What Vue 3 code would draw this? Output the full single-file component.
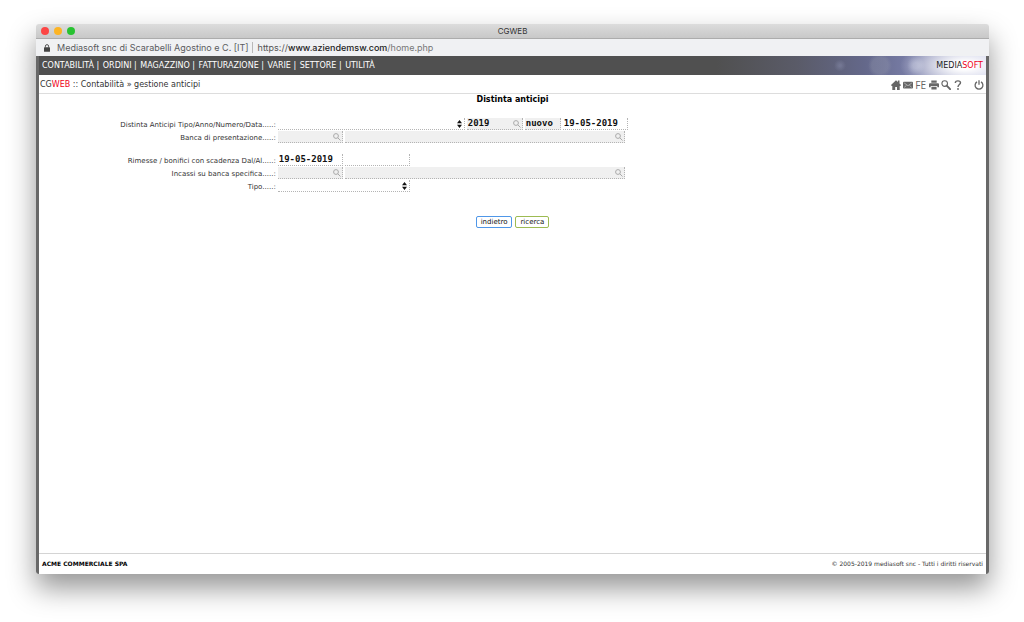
<script setup>
import { ref } from 'vue'

const menu = ['CONTABILITÀ', 'ORDINI', 'MAGAZZINO', 'FATTURAZIONE', 'VARIE', 'SETTORE', 'UTILITÀ']
const form = ref({
  tipo: '', anno: '2019', numero: 'nuovo', data: '19-05-2019',
  banca: '', bancaNome: '', dal: '19-05-2019', al: '',
  incassi: '', incassiNome: '', tipoIncasso: ''
})
</script>

<template>
  <div class="desktop">
    <div class="window">
      <div class="titlebar">
        <div class="lights">
          <button class="light red" aria-label="Chiudi"></button>
          <button class="light amber" aria-label="Riduci"></button>
          <button class="light green" aria-label="Ingrandisci"></button>
        </div>
        <span class="window-title">CGWEB</span>
      </div>
      <div class="address">
        <svg class="lock" viewBox="0 0 6 8"><path d="M1.4 3.5V2.2a1.6 1.6 0 0 1 3.2 0v1.3" fill="none" stroke="#444" stroke-width=".9" /><rect y="3.2" width="6" height="4.5" rx=".5" fill="#444" /></svg>
        <span class="owner">Mediasoft snc di Scarabelli Agostino e C. [IT]</span>
        <span class="url">https://<b>www.aziendemsw.com</b><i>/home.php</i></span>
      </div>

      <div class="page">
        <header class="menubar">
          <nav class="menu">
            <template v-for="(item, i) in menu" :key="item"><span v-if="i" class="sep"> | </span><a href="#">{{ item }}</a></template>
          </nav>
          <div class="brand">MEDIA<span>SOFT</span></div>
        </header>

        <div class="crumbs">
          <div class="path">CG<span class="web">WEB</span> :: Contabilità » gestione anticipi</div>
          <div class="tools">
            <a href="#" aria-label="Home"><svg width="10" height="10" viewBox="0 0 10 10"><path d="M5 .3 6.9 2V.5h1.600v3L10 5l-.7.900H8.700V10H6V7H4.200v3H1.300V5.900H.7L0 5z" /></svg></a>
            <a href="#" aria-label="Posta"><svg width="10" height="10" viewBox="0 0 10 10"><rect y="1.700" width="10" height="6.800" rx=".9" /><path d="m1.200 3 3.800 2.700L8.800 3M1.200 7.400l2.300-2M8.800 7.400l-2.300-2" fill="none" stroke="#ccc" stroke-width=".7" /></svg></a>
            <a href="#" class="fe">FE</a>
            <a href="#" aria-label="Stampa"><svg width="10" height="10" viewBox="0 0 10 10"><path d="M2.300.6h5.400v2.200H2.300zM1 3.300h8q1 0 1 1v3H8.300V6H1.700v1.300H0v-3q0-1 1-1zM2.400 6.700h5.200v2.700H2.400z" /></svg></a>
            <a href="#" aria-label="Cerca"><svg width="10" height="10" viewBox="0 0 10 10"><circle cx="3.700" cy="3.600" r="2.800" fill="none" stroke="#666" stroke-width="1.100" /><path d="m5.700 5.700 3.400 3.500" stroke="#666" stroke-width="1.900" stroke-linecap="round" /></svg></a>
            <a href="#" aria-label="Aiuto"><svg width="10" height="10" viewBox="0 0 10 10"><path d="M2.300 2.900C2.300.1 7.500.2 7.500 2.800 7.500 4.600 5 4.600 5 6.900" fill="none" stroke="#666" stroke-width="1.400" /><circle cx="5" cy="9" r=".9" /></svg></a>
            <a href="#" class="power" aria-label="Esci"><svg width="10" height="10" viewBox="0 0 10 10"><path d="M3 1.900a3.900 3.900 0 1 0 4 0M5 .3v4.500" fill="none" stroke="#666" stroke-width="1.300" /></svg></a>
          </div>
        </div>

        <main>
          <h1>Distinta anticipi</h1>
          <form @submit.prevent>
            <div class="row">
              <label for="tipo">Distinta Anticipi Tipo/Anno/Numero/Data.....:</label>
              <div class="field w-type">
                <select id="tipo" v-model="form.tipo"><option value=""></option></select>
                <svg class="arrows" viewBox="0 0 5 8"><path d="M0 3.300 2.500 0 5 3.300zM0 4.700h5L2.500 8z" /></svg>
              </div>
              <div class="field grey w-year">
                <input v-model="form.anno" aria-label="Anno">
                <button class="lens" type="button" aria-label="Cerca anno"><svg viewBox="0 0 8 8"><circle cx="3" cy="3" r="2.400" /><path d="m4.800 4.800 2.700 2.700" /></svg></button>
              </div>
              <div class="field grey w-number"><input v-model="form.numero" aria-label="Numero"></div>
              <div class="field w-code"><input v-model="form.data" aria-label="Data"></div>
            </div>
            <div class="row">
              <label for="banca">Banca di presentazione.....:</label>
              <div class="field grey w-code">
                <input id="banca" v-model="form.banca">
                <button class="lens" type="button" aria-label="Cerca codice banca"><svg viewBox="0 0 8 8"><circle cx="3" cy="3" r="2.400" /><path d="m4.800 4.800 2.700 2.700" /></svg></button>
              </div>
              <div class="field grey w-name">
                <input v-model="form.bancaNome" aria-label="Nome banca">
                <button class="lens" type="button" aria-label="Cerca nome banca"><svg viewBox="0 0 8 8"><circle cx="3" cy="3" r="2.400" /><path d="m4.800 4.800 2.700 2.700" /></svg></button>
              </div>
            </div>
            <div class="row group">
              <label for="dal">Rimesse / bonifici con scadenza Dal/Al.....:</label>
              <div class="field w-code"><input id="dal" v-model="form.dal"></div>
              <div class="field w-code"><input v-model="form.al" aria-label="Al"></div>
            </div>
            <div class="row">
              <label for="incassi">Incassi su banca specifica.....:</label>
              <div class="field grey w-code">
                <input id="incassi" v-model="form.incassi">
                <button class="lens" type="button" aria-label="Cerca codice banca incassi"><svg viewBox="0 0 8 8"><circle cx="3" cy="3" r="2.400" /><path d="m4.800 4.800 2.700 2.700" /></svg></button>
              </div>
              <div class="field grey w-name">
                <input v-model="form.incassiNome" aria-label="Nome banca incassi">
                <button class="lens" type="button" aria-label="Cerca nome banca incassi"><svg viewBox="0 0 8 8"><circle cx="3" cy="3" r="2.400" /><path d="m4.800 4.800 2.700 2.700" /></svg></button>
              </div>
            </div>
            <div class="row">
              <label for="tipo2">Tipo.....:</label>
              <div class="field w-kind">
                <select id="tipo2" v-model="form.tipoIncasso"><option value=""></option></select>
                <svg class="arrows" viewBox="0 0 5 8"><path d="M0 3.300 2.500 0 5 3.300zM0 4.700h5L2.500 8z" /></svg>
              </div>
            </div>
            <div class="actions">
              <button type="button" class="btn back">indietro</button>
              <button type="submit" class="btn search">ricerca</button>
            </div>
          </form>
        </main>

        <footer>
          <strong>ACME COMMERCIALE SPA</strong>
          <span>© 2005-2019 mediasoft snc - Tutti i diritti riservati</span>
        </footer>
      </div>
    </div>
  </div>
</template>

<style>
body { background: #fff; }
</style>

<style scoped>
* { box-sizing: border-box; }
a { color: inherit; text-decoration: none; }
.desktop {
  min-height: 100vh;
  padding: 24px 35px 48px 36px;
  display: flex;
  overflow: hidden;
  font-family: "DejaVu Sans", Verdana, sans-serif;
  font-size: 7px;
  color: #333;
}
.window {
  flex: 1;
  display: flex;
  flex-direction: column;
  border-radius: 3px;
  background: #fff;
  box-shadow: 0 14px 28px rgba(0, 0, 0, .42);
}
.titlebar {
  height: 15px;
  padding: 0 5px;
  display: grid;
  grid-template-columns: 1fr auto 1fr;
  align-items: center;
  background: linear-gradient(#dcdcdc, #c8c8c8);
  border-bottom: 1px solid #acacac;
  border-radius: 3px 3px 0 0;
  font: 8px Inter, sans-serif;
}
.lights { display: flex; gap: 5px; }
.light { width: 8px; height: 8px; padding: 0; border: 0; border-radius: 50%; }
.red { background: #fc4645; }
.amber { background: #fdb424; }
.green { background: #28c231; }
.address {
  height: 17px;
  padding-left: 8px;
  display: flex;
  align-items: center;
  background: #f0f1f3;
  font: 9px/11px Inter, sans-serif;
  color: #5a5b5e;
}
.lock { width: 6px; height: 8px; margin-right: 7px; }
.owner { padding-right: 3px; border-right: 1px solid #b8b8b8; }
.url { padding-left: 5px; color: #555; }
.url b { font-weight: 500; color: #222; }
.url i { font-style: normal; color: #777; }
.page {
  flex: 1;
  display: flex;
  flex-direction: column;
  border: solid #686868;
  border-width: 0 3px;
  border-radius: 0 0 3px 3px;
}
.menubar {
  height: 19px;
  padding: 0 3px;
  display: flex;
  justify-content: space-between;
  align-items: center;
  background-color: #505050;
  background-image:
    radial-gradient(ellipse 64px 26px at right 22px top 50%, #fff 15%, rgba(255, 255, 255, 0)),
    radial-gradient(circle at right 106px top 50%, rgba(160, 165, 180, .25) 8px, transparent 12px),
    radial-gradient(circle at right 70px top 50%, rgba(190, 195, 220, .4) 3px, transparent 9px),
    radial-gradient(circle at right 146px top 50%, rgba(150, 155, 185, .35) 1px, transparent 6px),
    linear-gradient(90deg, rgba(80, 80, 80, 0), #5a5b68 30%, #64688a 55%, #7c81ac 75%, #b8bce0);
  background-size: auto, auto, auto, auto, 270px 100%;
  background-position: right;
  background-repeat: no-repeat;
  font-size: 8px;
  line-height: 17px;
}
.menu { color: #fff; white-space: pre; }
.sep { padding-right: 1px; }
.brand { color: #222; }
.brand span, .web { color: #f00020; }
.crumbs {
  height: 19px;
  padding: 0 2px 0 1px;
  display: flex;
  align-items: center;
  justify-content: space-between;
  border-bottom: 1px solid #ddd;
  font-size: 8px;
}
.tools { display: flex; align-items: center; gap: 2px; padding-top: 2px; color: #666; }
.tools a { display: flex; }
.tools svg { fill: #666; }
.tools .fe { margin-right: 1px; font: 10px/10px "Open Sans", sans-serif; }
.tools .power { margin-left: 9px; }
main { flex: 1; }
h1 { margin: 0; padding-bottom: 13px; text-align: center; font-size: 8px; line-height: 11px; color: #000; }
.row { display: flex; gap: 2px; height: 12px; margin-bottom: 1px; }
.row label { width: 25%; flex: none; text-align: right; line-height: 14px; white-space: nowrap; }
.group { margin-top: 11px; }
.field {
  display: flex;
  align-items: center;
  border: dotted #b4b4b4;
  border-width: 0 1px 1px 0;
  height: 12px;
}
.grey { background: #f0f0f0; }
.w-type { width: 187px; }
.w-year { width: 56px; }
.w-number { width: 36px; }
.w-code { width: 65px; }
.w-name { width: 280px; }
.w-kind { width: 132px; }
.field input, .field select {
  flex: 1;
  min-width: 0;
  height: 11px;
  padding: 0 1px 1px;
  border: 0;
  outline: 0;
  background: transparent;
  appearance: none;
  font: bold 9px/10px "DejaVu Sans Mono", monospace;
  color: #111;
}
.arrows { width: 5px; height: 8px; margin-right: 2px; fill: #111; }
.lens { display: flex; padding: 0; margin-right: 1px; border: 0; background: none; }
.lens svg { width: 8px; height: 8px; fill: none; stroke: #aaa; }
.actions { display: flex; justify-content: center; gap: 3px; margin-top: 24px; }
.btn {
  height: 12px;
  padding: 0 4px;
  border: 1px solid;
  border-radius: 2px;
  background: #fff;
  font: 7px "DejaVu Sans", sans-serif;
  color: #111;
}
.back { border-color: #4f97e8; }
.search { border-color: #9dbb52; }
footer {
  height: 21px;
  padding: 0 3px 1px;
  display: flex;
  justify-content: space-between;
  align-items: center;
  border-top: 1px solid #d4d4d4;
  font-size: 6px;
}
footer strong { color: #000; }
</style>
